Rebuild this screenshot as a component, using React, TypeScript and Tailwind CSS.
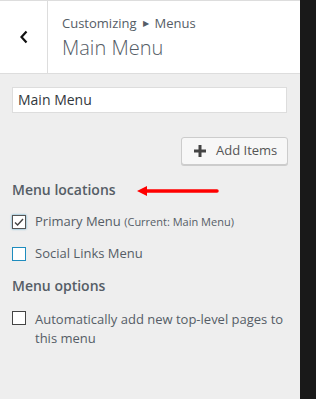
import React from 'react';

function Check({ checked, focus }: { checked?: boolean; focus?: boolean }) {
  return (
    <span
      className={`relative mt-[1px] flex h-[14px] w-[14px] shrink-0 items-center justify-center border bg-white ${
        focus ? 'border-[#1e8cbe]' : checked ? 'border-[#555] shadow-[0_0_2px_rgba(30,140,190,0.8)]' : 'border-[#444]'
      }`}
    >
      {checked && (
        <svg width="12" height="12" viewBox="0 0 12 12" className="absolute">
          <path d="M2 6.5 L4.6 9 L10 3" fill="none" stroke="#444" strokeWidth="1.4" />
        </svg>
      )}
    </span>
  );
}

export default function App() {
  return (
    <div className="flex h-[399px] w-[316px] font-['Open_Sans',sans-serif] text-[#555d66]">
      <div className="flex w-[300px] flex-col bg-[#eeeeee]">
        {/* header */}
        <div className="flex h-[74px] border-y border-[#dddddd] bg-white">
          <div className="flex w-[48px] items-center justify-center border-r border-[#dddddd]">
            <svg width="10" height="14" viewBox="0 0 10 14">
              <path d="M7.5 1.5 L2.5 7 L7.5 12.5" fill="none" stroke="#111" strokeWidth="2.2" />
            </svg>
          </div>
          <div className="flex flex-col justify-center pl-[14px] pt-[2px]">
            <div className="flex items-center gap-[6px] text-[13px] leading-[18px]">
              <span>Customizing</span>
              <span className="text-[8px]">▶</span>
              <span>Menus</span>
            </div>
            <div className="mt-[2px] text-[20px] font-light leading-[28px]">Main Menu</div>
          </div>
        </div>

        <div className="flex flex-col px-3">
          <div className="mt-[13px] h-[26px] w-[275px] border border-[#dddddd] bg-white px-[5px] text-[14px] leading-[24px] text-[#32373c]">
            Main Menu
          </div>

          <div className="mt-[24px] flex justify-end">
            <div className="flex h-[28px] w-[107px] items-center gap-[10px] rounded-[3px] border border-[#cccccc] bg-[#f7f7f7] pl-[12px] text-[13px] text-[#555] shadow-[0_1px_0_#ccc]">
              <svg width="12" height="12" viewBox="0 0 12 12">
                <path d="M6 0 V12 M0 6 H12" stroke="#444" strokeWidth="3" />
              </svg>
              <span>Add Items</span>
            </div>
          </div>

          <div className="mt-[13px] flex items-center">
            <span className="text-[14px] font-semibold leading-[24px]">Menu locations</span>
            <svg width="82" height="12" viewBox="0 0 82 12" className="ml-[21px] mt-[1px]">
              <path d="M9 6 H80" stroke="#ff0000" strokeWidth="3.5" strokeLinecap="round" />
              <path d="M0 6 L10 1 L10 11 Z" fill="#ff0000" />
            </svg>
          </div>

          <div className="mt-[10px] flex items-center gap-[9px] text-[13px]">
            <Check checked />
            <span>
              Primary Menu <span className="text-[11px]">(Current: Main Menu)</span>
            </span>
          </div>

          <div className="mt-[12px] flex items-center gap-[9px] text-[13px]">
            <Check focus />
            <span>Social Links Menu</span>
          </div>

          <div className="mt-[11px] text-[14px] font-semibold leading-[24px]">Menu options</div>

          <div className="mt-[12px] flex items-start gap-[9px] text-[13px] leading-[19px]">
            <Check />
            <span>Automatically add new top-level pages to this menu</span>
          </div>
        </div>
      </div>
      <div className="w-[16px] bg-[#191919]" />
    </div>
  );
}
